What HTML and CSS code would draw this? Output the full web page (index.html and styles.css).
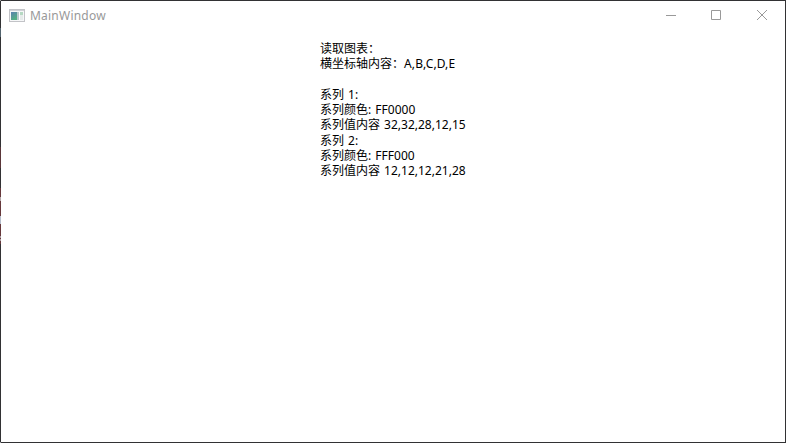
FILE: index.html
```
<!DOCTYPE html>
<html lang="zh-CN">
<head>
<meta charset="utf-8">
<title>MainWindow</title>
<link rel="stylesheet" href="styles.css">
</head>
<body>
<div class="window">
  <header class="titlebar">
    <svg class="app-icon" width="16" height="14" viewBox="0 0 16 14" shape-rendering="crispEdges">
      <defs>
        <linearGradient id="pane" x1="0" y1="0" x2="0.5" y2="1">
          <stop offset="0" stop-color="#5c80b0"/>
          <stop offset="1" stop-color="#55b082"/>
        </linearGradient>
      </defs>
      <rect x="0.5" y="0.5" width="15" height="12" fill="#f6f7f8" stroke="#c2c3c7"/>
      <rect x="1" y="1" width="14" height="1" fill="#d0d1d6"/>
      <rect x="2" y="3" width="6" height="8" fill="url(#pane)"/>
      <rect x="8" y="3" width="2" height="8" fill="#b9c9cc"/>
      <rect x="10" y="3" width="1" height="8" fill="#fff"/>
      <rect x="11" y="3" width="3" height="3" fill="#b5d8c2"/>
      <rect x="11" y="6" width="3" height="5" fill="#e6ebea"/>
    </svg>
    <span class="title">MainWindow</span>
    <div class="controls">
      <svg width="46" height="29" viewBox="0 0 46 29"><path d="M18 14.5h10"/></svg>
      <svg width="46" height="29" viewBox="0 0 46 29"><path d="M17.5 9.5h9v9h-9z"/></svg>
      <svg width="46" height="29" viewBox="0 0 46 29"><path d="M17 9l10 10M27 9l-10 10"/></svg>
    </div>
  </header>
  <main class="content">
    <div class="output">读取图表：<br>横坐标轴内容：<span class="values">A,B,C,D,E</span><br><br>系列 1:<br>系列颜色: FF0000<br>系列值内容 32,32,28,12,15<br>系列 2:<br>系列颜色: FFF000<br>系列值内容 12,12,12,21,28</div>
  </main>
</div>
</body>
</html>
```
FILE: styles.css
```
* { box-sizing: border-box; }
body {
  margin: 0;
  background: #fff;
  font: 12px/15.25px "Noto Sans", "Noto Sans CJK SC", sans-serif;
  color: #000;
}
.window {
  width: 786px;
  height: 443px;
  border: 1px solid #323234;
  border-left-color: transparent;
  background:
    linear-gradient(#fff, #fff) padding-box,
    linear-gradient(#323234 0 28px, #53646e 28px 37px, #323234 37px 147px, #5a3639 147px 168px, #323234 168px 188px, #66383b 188px 197px, #b3a6a8 197px 201px, #66383b 201px 216px, #b4bcca 216px 224px, #66383b 224px 236px, #a99ba0 236px 238px, #66383b 238px 239px, #a99ba0 239px 241px, #66383b 241px 244px, #323234 244px) border-box;
  display: flex;
  flex-direction: column;
  overflow: hidden;
}
.titlebar {
  height: 29px;
  display: flex;
  align-items: center;
  padding-left: 8px;
}
.title {
  margin-left: 5px;
  letter-spacing: .22px;
  color: #999;
}
.controls {
  display: flex;
  margin: 0 -1px 0 auto;
}
.controls svg {
  display: block;
  fill: none;
  stroke: #999;
  stroke-width: 1;
}
.content {
  display: flex;
  padding: 11px 0 0 319px;
}
.output {
  white-space: nowrap;
  word-spacing: 1px;
}
.values { letter-spacing: .12px; }
```
